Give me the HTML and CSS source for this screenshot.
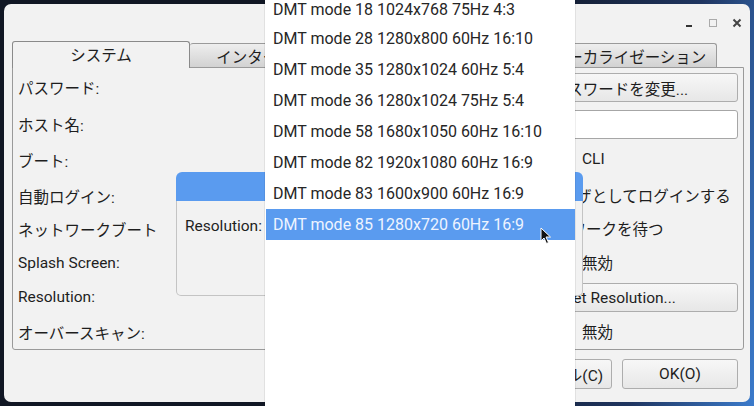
FILE: index.html
```html
<!DOCTYPE html>
<html lang="ja">
<head>
  <meta charset="UTF-8" />
  <meta name="viewport" content="width=device-width, initial-scale=1.0" />
  <title>Raspberry Pi の設定</title>
  <link rel="stylesheet" href="styles.css">
</head>
<body>

  <!-- Main window -->
  <div class="window">
    <div class="titlebar">
      <span class="title">Raspberry Pi の設定</span>
      <div class="controls">
        <svg width="10" height="10" viewBox="0 0 10 10"><rect x="2" y="7" width="6" height="2" fill="#333" /></svg>
        <svg width="10" height="10" viewBox="0 0 10 10"><rect x="1.5" y="1.5" width="7" height="7" fill="none" stroke="#aaa" /></svg>
        <svg width="10" height="10" viewBox="0 0 10 10"><path d="M1.5 1.5 L8.5 8.5 M8.5 1.5 L1.5 8.5" stroke="#444" stroke-width="2" /></svg>
      </div>
    </div>

    <div class="tabs">
      <div class="tab active">システム</div>
      <div class="tab">インターフェイス</div>
      <div class="tab">パフォーマンス</div>
      <div class="tab last">ローカライゼーション</div>
    </div>

    <div class="panel">
      <div class="cell">パスワード:</div>
      <div class="cell"><button class="btn wide">パスワードを変更...</button></div>

      <div class="cell">ホスト名:</div>
      <div class="cell"><input class="entry" type="text" value="raspberry" /></div>

      <div class="cell">ブート:</div>
      <div class="cell">
        <span class="option first"><span class="radio on"></span>GUI</span>
        <span class="option"><span class="radio"></span>CLI</span>
      </div>

      <div class="cell">自動ログイン:</div>
      <div class="cell"><span class="option"><span class="check"></span>'pi' ユーザとしてログインする</span></div>

      <div class="cell">ネットワークブート</div>
      <div class="cell"><span class="option"><span class="check"></span>ネットワークを待つ</span></div>

      <div class="cell">Splash Screen:</div>
      <div class="cell">
        <span class="option first"><span class="radio"></span>有効</span>
        <span class="option"><span class="radio on"></span>無効</span>
      </div>

      <div class="cell">Resolution:</div>
      <div class="cell"><button class="btn wide">Set Resolution...</button></div>

      <div class="cell">オーバースキャン:</div>
      <div class="cell">
        <span class="option first"><span class="radio"></span>有効</span>
        <span class="option"><span class="radio on"></span>無効</span>
      </div>
    </div>

    <div class="actions">
      <button class="btn">キャンセル(C)</button>
      <button class="btn">OK(O)</button>
    </div>
  </div>

  <!-- Resolution dialog -->
  <div class="dialog">
    <div class="dialog-title"></div>
    <div class="dialog-body">
      <span>Resolution:</span>
      <span class="combo">DMT mode 85</span>
    </div>
  </div>

  <!-- Open combo list -->
  <div class="dropdown">
    <ul class="modes">
      <li>DMT mode 18 1024x768 75Hz 4:3</li>
      <li>DMT mode 28 1280x800 60Hz 16:10</li>
      <li>DMT mode 35 1280x1024 60Hz 5:4</li>
      <li>DMT mode 36 1280x1024 75Hz 5:4</li>
      <li>DMT mode 58 1680x1050 60Hz 16:10</li>
      <li>DMT mode 82 1920x1080 60Hz 16:9</li>
      <li>DMT mode 83 1600x900 60Hz 16:9</li>
      <li class="selected">DMT mode 85 1280x720 60Hz 16:9</li>
    </ul>
  </div>

  <svg class="cursor" width="12" height="18" viewBox="0 0 12 18">
    <path d="M1 1 L1 14 L4 11 L6.5 16.5 L8.5 15.5 L6 10 L10.5 10 Z" fill="#111" stroke="#fff" stroke-width="1" />
  </svg>

</body>
</html>
```

FILE: styles.css
```css
body {
  margin: 0;
  width: 754px;
  height: 406px;
  overflow: hidden;
  position: relative;
  background: linear-gradient(100deg, #111724 62%, #1f3560 85%, #3b7bcc 100%);
  font-family: Roboto, "Noto Sans CJK JP", sans-serif;
  font-size: 15.5px;
  color: #1e1e1e;
}

.window {
  box-sizing: border-box;
  margin: 4px 0 0 4px;
  width: 746px;
  height: 398px;
  padding: 0 6px 0 8px;
  background: #f2f2f2;
  border-radius: 7px;
}

.titlebar {
  height: 37px;
  display: flex;
  align-items: center;
  justify-content: center;
  position: relative;
}

.title {
  font-weight: bold;
  font-size: 14px;
}

.controls {
  position: absolute;
  right: 2px;
  top: 14px;
  display: flex;
  gap: 14px;
}

.tabs {
  display: flex;
  align-items: flex-end;
  height: 26px;
}

.tab {
  box-sizing: border-box;
  width: 176px;
  height: 24px;
  border: 1px solid #9a9a9a;
  border-bottom: none;
  border-left: none;
  border-radius: 3px 3px 0 0;
  background: linear-gradient(#eeeeee, #d2d2d2);
  display: flex;
  align-items: center;
  justify-content: center;
}

.tab.active {
  width: 178px;
  height: 27px;
  margin-bottom: -1px;
  border-left: 1px solid #8a8a8a;
  border-color: #8a8a8a;
  background: #f2f2f2;
  position: relative;
  z-index: 1;
  padding-bottom: 3px;
}

.tab.last {
  width: 175px;
}

.panel {
  box-sizing: border-box;
  height: 283px;
  border: 1px solid #9a9a9a;
  border-radius: 0 0 3px 3px;
  padding: 5px 5px 1px 5px;
  display: grid;
  grid-template-columns: 1fr 236px;
  grid-template-rows: 37px 36px 36px 33px 34px 34px 35px 29px;
}

.cell {
  height: 29px;
  display: flex;
  align-items: center;
}

.panel > .cell:nth-child(odd) {
  padding-bottom: 2px;
  box-sizing: border-box;
}

.btn {
  box-sizing: border-box;
  height: 30px;
  width: 116px;
  border: 1px solid #adadad;
  border-radius: 3px;
  background: linear-gradient(#f7f7f7, #e7e7e7);
  font: inherit;
  color: #1e1e1e;
  padding: 0;
}

.btn.wide {
  width: 100%;
  height: 29px;
}

.entry {
  box-sizing: border-box;
  width: 100%;
  height: 29px;
  border: 1px solid #a6a6a6;
  border-radius: 3px;
  background: #fff;
  font: inherit;
  padding: 0 5px;
}

.option {
  display: flex;
  align-items: center;
  gap: 8px;
  margin-bottom: 4px;
}

.option.first {
  width: 58px;
}

.radio, .check {
  width: 14px;
  height: 14px;
  box-sizing: border-box;
  border: 1px solid #8a8a8a;
  background: #fff;
  border-radius: 50%;
}

.check {
  border-radius: 2px;
}

.actions {
  display: flex;
  justify-content: flex-end;
  gap: 10px;
  margin-top: 9px;
  padding-right: 6px;
}

.dialog {
  position: absolute;
  left: 176px;
  top: 172px;
  width: 407px;
  height: 124px;
  display: flex;
  flex-direction: column;
}

.dialog-title {
  height: 29px;
  background: #5a9bef;
  border-radius: 6px 6px 0 0;
}

.dialog-body {
  flex: 1;
  background: #f2f2f2;
  border: 1px solid #c4c4c4;
  border-top: none;
  border-radius: 0 0 5px 5px;
  padding: 10px 8px;
  display: flex;
  align-items: flex-start;
  gap: 8px;
}

.dialog-body span {
  height: 29px;
  display: flex;
  align-items: center;
}

.dropdown {
  position: absolute;
  left: 265px;
  top: 0;
  width: 310px;
  height: 406px;
  background: #fff;
  box-shadow: 0 0 1px rgba(0, 0, 0, 0.4);
  overflow: hidden;
}

.modes {
  list-style: none;
  margin: -6px 0 0 0;
  padding: 0;
  font-size: 16px;
}

.modes li {
  height: 31px;
  line-height: 31px;
  padding-left: 8px;
  color: #262626;
  white-space: nowrap;
}

.modes li:first-child {
  height: 29px;
}

.modes li.selected {
  margin-left: 1px;
  padding-left: 7px;
  background: #5a9bef;
  color: #eef4ff;
}

.cursor {
  position: absolute;
  left: 540px;
  top: 227px;
}
```
